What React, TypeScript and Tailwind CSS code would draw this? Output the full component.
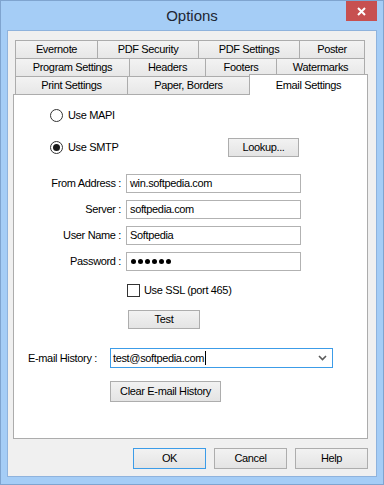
const tabBase =
  'flex items-center justify-center border-t border-x border-[#acacac] bg-linear-to-b from-[#f3f3f3] to-[#e7e7e7] -ml-px first:ml-0 h-full'

function Tab({ label, w }: { label: string; w: string }) {
  return <div className={`${tabBase} ${w}`}>{label}</div>
}

function Btn({ label, className = '', focus = false }: { label: string; className?: string; focus?: boolean }) {
  return (
    <div
      className={`flex items-center justify-center border bg-linear-to-b from-[#f2f2f2] to-[#e4e4e4] ${
        focus ? 'border-[#3c9ce8]' : 'border-[#adadad]'
      } ${className}`}
    >
      {label}
    </div>
  )
}

function Radio({ checked, label }: { checked?: boolean; label: string }) {
  return (
    <div className="flex h-[13px] items-center gap-[5px]">
      <div className="flex h-[13px] w-[13px] items-center justify-center rounded-full border border-[#333] bg-white">
        {checked && <div className="h-[7px] w-[7px] rounded-full bg-[#1a1a1a]" />}
      </div>
      <span>{label}</span>
    </div>
  )
}

function Field({ label, children }: { label: string; children: React.ReactNode }) {
  return (
    <div className="flex h-[19px] items-center">
      <span className="w-[107px] text-right">{label}</span>
      <div className="ml-[5px] flex h-[19px] w-[175px] items-center border border-[#b2b2b2] bg-white px-[3px]">
        {children}
      </div>
    </div>
  )
}

export default function App() {
  return (
    <div className="flex h-[485px] w-[384px] flex-col border border-[#7fa4cf] bg-[#a5cdf6] font-['Liberation_Sans',Arial,sans-serif] text-[11px] leading-[13px] tracking-[-0.35px] text-black">
      {/* title bar */}
      <div className="relative flex h-[29px] items-center justify-center">
        <span className="text-[15px] leading-[18px] tracking-normal text-[#1e2633]">Options</span>
        <div className="absolute right-[6px] top-0 flex h-[20px] w-[31px] items-center justify-center bg-[#c75050]">
          <svg width="9" height="9" viewBox="0 0 9 9">
            <path d="M1 1L8 8M8 1L1 8" stroke="white" strokeWidth="2" />
          </svg>
        </div>
      </div>

      {/* client */}
      <div className="mx-[6px] mb-[7px] flex flex-1 flex-col border border-[#8fb3dd] bg-[#f0f0f0] px-[5px] pt-[9px]">
        {/* tabs */}
        <div className="flex flex-col pl-[2px]">
          <div className="flex h-[18px]">
            <Tab label="Evernote" w="w-[83px]" />
            <Tab label="PDF Security" w="w-[102px]" />
            <Tab label="PDF Settings" w="w-[102px]" />
            <Tab label="Poster" w="w-[66px]" />
          </div>
          <div className="flex h-[18px]">
            <Tab label="Program Settings" w="w-[115px]" />
            <Tab label="Headers" w="w-[77px]" />
            <Tab label="Footers" w="w-[72px]" />
            <Tab label="Watermarks" w="w-[89px]" />
          </div>
          <div className="flex h-[18px] items-end">
            <Tab label="Print Settings" w="w-[113px]" />
            <Tab label="Paper, Borders" w="w-[123px]" />
            <div className="relative z-10 -mb-px -ml-px flex h-[21px] w-[119px] items-start justify-center border-x border-t border-[#acacac] bg-white pt-[4px]">
              Email Settings
            </div>
          </div>
        </div>

        {/* panel */}
        <div className="flex h-[345px] w-[355px] flex-col border border-[#acacac] bg-white">
          <div className="mt-[14px] pl-[36px]">
            <Radio label="Use MAPI" />
          </div>
          <div className="mt-[16px] flex h-[19px] items-center pl-[36px]">
            <div className="w-[178px]">
              <Radio checked label="Use SMTP" />
            </div>
            <Btn label="Lookup..." className="h-[19px] w-[71px]" />
          </div>

          <div className="mt-[17px] flex flex-col gap-[7px]">
            <Field label="From Address :">win.softpedia.com</Field>
            <Field label="Server :">softpedia.com</Field>
            <Field label="User Name :">Softpedia</Field>
            <Field label="Password :">
              <div className="flex gap-[2px] pl-[1px]">
                {[0, 1, 2, 3, 4, 5].map((i) => (
                  <div key={i} className="h-[5px] w-[5px] rounded-full bg-black" />
                ))}
              </div>
            </Field>
          </div>

          <div className="ml-[113px] mt-[13px] flex h-[13px] items-center gap-[4px]">
            <div className="h-[13px] w-[13px] border border-[#333] bg-white" />
            <span>Use SSL (port 465)</span>
          </div>

          <Btn label="Test" className="ml-[114px] mt-[13px] h-[19px] w-[72px]" />

          <div className="mt-[19px] flex items-center pl-[14px]">
            <span className="w-[82px]">E-mail History :</span>
            <div className="flex h-[20px] w-[223px] items-center border border-[#3c9ce8] bg-white pl-[2px] pr-[5px]">
              <span>test@softpedia.com</span>
              <div className="ml-px h-[14px] w-px bg-black" />
              <svg className="ml-auto" width="9" height="6" viewBox="0 0 9 6">
                <path d="M1 1L4.5 4.5L8 1" stroke="#5a5a5a" strokeWidth="1.6" fill="none" />
              </svg>
            </div>
          </div>

          <Btn label="Clear E-mail History" className="ml-[96px] mt-[13px] h-[21px] w-[111px]" />
        </div>

        {/* dialog buttons */}
        <div className="mt-[9px] flex w-[355px] justify-end gap-[8px]">
          <Btn label="OK" focus className="h-[21px] w-[73px]" />
          <Btn label="Cancel" className="h-[21px] w-[73px]" />
          <Btn label="Help" className="h-[21px] w-[73px]" />
        </div>
      </div>
    </div>
  )
}
